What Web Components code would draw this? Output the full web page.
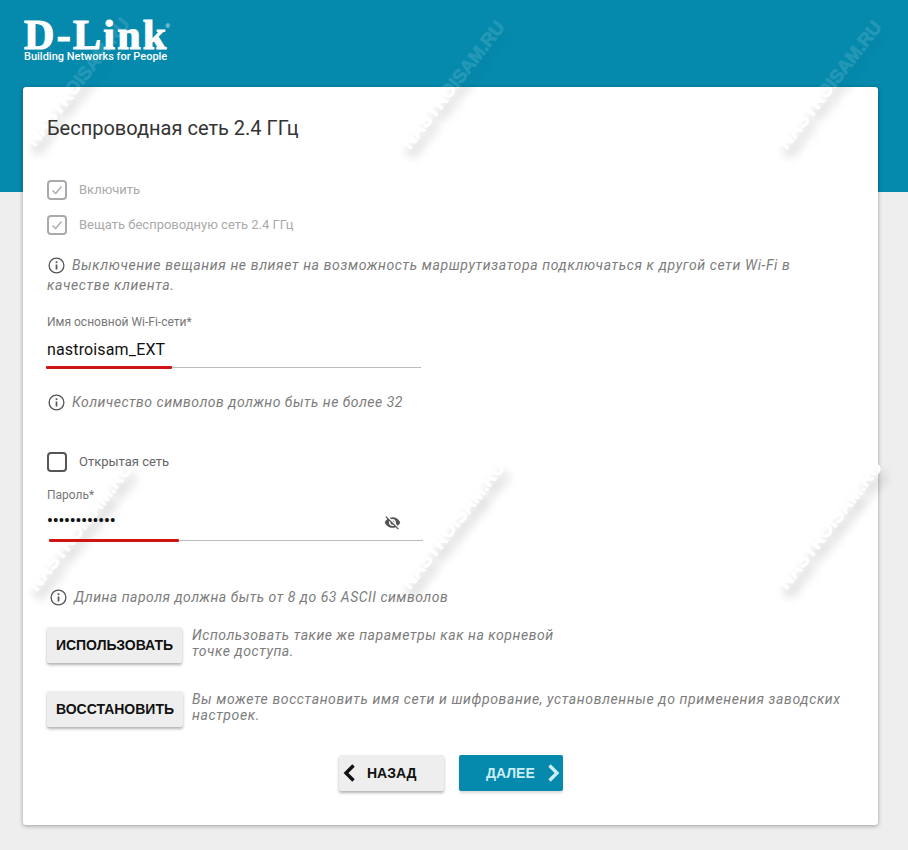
<!DOCTYPE html>
<html lang="ru">
<head>
<meta charset="utf-8">
<title>D-Link</title>
<style>
  html, body { margin: 0; padding: 0; }
  body { font-family: Roboto, "Liberation Sans", sans-serif; background: #eee; }
</style>
</head>
<body>
<dl-page>
  <dl-logo slot="logo"></dl-logo>

  <dl-card title="Беспроводная сеть 2.4 ГГц">
    <dl-check checked disabled>Включить</dl-check>
    <dl-check checked disabled style="margin-top:15px">Вещать беспроводную сеть 2.4 ГГц</dl-check>
    <dl-hint style="margin-top:20px; letter-spacing:.63px">Выключение вещания не влияет на возможность маршрутизатора подключаться к другой сети Wi-Fi в качестве клиента.</dl-hint>

    <dl-field label="Имя основной Wi-Fi-сети*" value="nastroisam_EXT" mark="126" style="margin-top:19px"></dl-field>
    <dl-hint style="margin-top:24px">Количество символов должно быть не более 32</dl-hint>

    <dl-check style="margin-top:40px">Открытая сеть</dl-check>
    <dl-field label="Пароль*" value="••••••••••••" mark="130" shift="2" password style="margin-top:15px"></dl-field>
    <dl-hint style="margin-top:46px; margin-left:2px">Длина пароля должна быть от 8 до 63 ASCII символов</dl-hint>

    <dl-action label="Использовать" style="margin-top:20px">Использовать такие же параметры как на корневой точке доступа.</dl-action>
    <dl-action label="Восстановить" wide style="margin-top:28px; letter-spacing:.62px">Вы можете восстановить имя сети и шифрование, установленные до применения заводских настроек.</dl-action>

    <dl-nav>
      <dl-nav-button dir="back">Назад</dl-nav-button>
      <dl-nav-button dir="next">Далее</dl-nav-button>
    </dl-nav>
  </dl-card>

  <dl-watermark slot="marks" x="78" y="82" fade="5"></dl-watermark>
  <dl-watermark slot="marks" x="453" y="85" fade="2"></dl-watermark>
  <dl-watermark slot="marks" x="830" y="85" fade="2"></dl-watermark>
  <dl-watermark slot="marks" x="80" y="527"></dl-watermark>
  <dl-watermark slot="marks" x="453" y="525"></dl-watermark>
  <dl-watermark slot="marks" x="830" y="525"></dl-watermark>
</dl-page>

<script>
// Страница: бирюзовая полоса сверху, логотип и карточка поверх неё
class DlPage extends HTMLElement {
  constructor() {
    super();
    this.attachShadow({ mode: 'open' });
    this.shadowRoot.innerHTML = `
      <style>
        :host {
          display: block;
          position: relative;
          height: 850px;
          overflow: hidden;
          background: linear-gradient(#0589ac 0 192px, #eeeeee 192px);
        }
        .head { padding: 22px 24px 0; height: 65px; }
        .main { padding: 0 30px 0 23px; }
      </style>
      <div class="head"><slot name="logo"></slot></div>
      <div class="main"><slot></slot></div>
      <slot name="marks"></slot>
    `;
  }
}

class DlLogo extends HTMLElement {
  constructor() {
    super();
    this.attachShadow({ mode: 'open' });
    this.shadowRoot.innerHTML = `
      <style>
        :host { display: block; width: 146px; color: #fff; }
        .name {
          display: flex;
          align-items: flex-start;
          font: 700 42px/27px "Liberation Serif", serif;
          letter-spacing: 2.3px;
          -webkit-text-stroke: 1.2px #fff;
        }
        .reg {
          font: 400 6px/8px "Liberation Sans", sans-serif;
          letter-spacing: 0;
          -webkit-text-stroke: 0;
          margin-left: -3px;
        }
        .tag {
          margin-top: 1px;
          font: 500 11px/14px Roboto, sans-serif;
          white-space: nowrap;
        }
      </style>
      <div class="name"><span>D-Link</span><span class="reg">®</span></div>
      <div class="tag">Building Networks for People</div>
    `;
  }
}

class DlCard extends HTMLElement {
  constructor() {
    super();
    this.attachShadow({ mode: 'open' });
    this.shadowRoot.innerHTML = `
      <style>
        :host {
          display: block;
          box-sizing: border-box;
          height: 738px;
          padding: 30px 24px 0;
          background: #fff;
          border-radius: 3px;
          box-shadow: 0 1px 4px rgba(0, 0, 0, .35);
        }
        h2 {
          position: relative;
          z-index: 1;
          margin: 0 0 41px;
          font: 400 20px/22px Roboto, "Liberation Sans", sans-serif;
          color: #333;
        }
      </style>
      <h2></h2>
      <slot></slot>
    `;
    this.shadowRoot.querySelector('h2').textContent = this.getAttribute('title');
    this.removeAttribute('title');
  }
}

class DlCheck extends HTMLElement {
  constructor() {
    super();
    this.attachShadow({ mode: 'open' });
    const checked = this.hasAttribute('checked');
    const disabled = this.hasAttribute('disabled');
    this.shadowRoot.innerHTML = `
      <style>
        :host {
          display: flex;
          position: relative;
          z-index: 1;
          align-items: center;
          gap: 12px;
          font-size: 13px;
          line-height: 20px;
          color: ${disabled ? '#aaa' : '#666'};
        }
        .box {
          box-sizing: border-box;
          width: 20px;
          height: 20px;
          border: 2px solid ${disabled ? '#aaa' : '#555'};
          border-radius: 4px;
          display: flex;
          align-items: center;
          justify-content: center;
        }
        svg { display: block; width: 12px; height: 12px; }
      </style>
      <span class="box">${checked ? `
        <svg viewBox="0 0 12 12" fill="none" stroke="#aaa" stroke-width="1.4">
          <path d="M1.5 6.5 4.7 9.5 10.5 2.5"/>
        </svg>` : ''}</span>
      <span><slot></slot></span>
    `;
  }
}

class DlHint extends HTMLElement {
  constructor() {
    super();
    this.attachShadow({ mode: 'open' });
    this.shadowRoot.innerHTML = `
      <style>
        :host {
          display: block;
          position: relative;
          z-index: 1;
          max-width: 770px;
          font-style: italic;
          font-size: 14px;
          letter-spacing: .5px;
          line-height: 20px;
          color: #7c7c7c;
        }
        svg { width: 17px; height: 17px; vertical-align: -4px; margin: 0 7px 0 1px; }
      </style>
      <svg viewBox="0 0 17 17" fill="none" stroke="#555">
        <circle cx="8.5" cy="8.5" r="7.4" stroke-width="1.3"/>
        <path d="M8.5 7.5v5" stroke-width="1.7"/>
        <path d="M8.5 4.3v1.8" stroke-width="1.7"/>
      </svg><slot></slot>
    `;
  }
}

class DlField extends HTMLElement {
  constructor() {
    super();
    this.attachShadow({ mode: 'open' });
    const password = this.hasAttribute('password');
    const shift = this.getAttribute('shift') || 0;
    this.shadowRoot.innerHTML = `
      <style>
        /* z-index: значение и красная черта лежат поверх водяного знака */
        :host { display: block; position: relative; z-index: 1; width: 376px; }
        label { display: block; font-size: 12px; line-height: 16px; color: #777; }
        .row {
          display: flex;
          align-items: center;
          justify-content: space-between;
          box-sizing: border-box;
          height: 36px;
          margin-top: 1px;
          color: #111;
          font-size: 16px;
          letter-spacing: .15px;
        }
        .val.dots { font-weight: 700; letter-spacing: -.05px; margin-bottom: 3px; }
        .line {
          position: relative;
          width: 374px;
          height: 1px;
          margin-left: ${shift}px;
          background: #bbb;
        }
        .mark {
          position: absolute;
          left: ${shift ? 0 : -1}px;
          top: -1px;
          height: 3px;
          background: #d01313;
          border-radius: 1px;
        }
        svg { display: block; width: 17px; height: 17px; margin-right: 22px; fill: #555; }
      </style>
      <label></label>
      <div class="row">
        <span class="val${password ? ' dots' : ''}"></span>
        ${password ? `<svg viewBox="0 0 24 24"><path d="M12 7c2.76 0 5 2.24 5 5 0 .65-.13 1.26-.36 1.83l2.92 2.92c1.51-1.26 2.7-2.89 3.43-4.75-1.73-4.39-6-7.5-11-7.5-1.4 0-2.74.25-3.98.7l2.16 2.16C10.74 7.13 11.35 7 12 7zM2 4.27l2.28 2.28.46.46C3.08 8.3 1.78 10.02 1 12c1.73 4.39 6 7.5 11 7.5 1.55 0 3.03-.3 4.38-.84l.42.42L19.73 22 21 20.73 3.27 3 2 4.27zM7.53 9.8l1.55 1.55c-.05.21-.08.43-.08.65 0 1.66 1.34 3 3 3 .22 0 .44-.03.65-.08l1.55 1.55c-.67.33-1.41.53-2.2.53-2.76 0-5-2.24-5-5 0-.79.2-1.53.53-2.2zm4.31-.78l3.15 3.15.02-.16c0-1.66-1.34-3-3-3l-.17.01z"/></svg>` : ''}
      </div>
      <div class="line"><span class="mark"></span></div>
    `;
    this.shadowRoot.querySelector('label').textContent = this.getAttribute('label');
    this.shadowRoot.querySelector('.val').textContent = this.getAttribute('value');
    this.shadowRoot.querySelector('.mark').style.width = this.getAttribute('mark') + 'px';
  }
}

class DlAction extends HTMLElement {
  constructor() {
    super();
    this.attachShadow({ mode: 'open' });
    const wide = this.hasAttribute('wide');
    this.shadowRoot.innerHTML = `
      <style>
        :host { display: flex; align-items: flex-start; gap: ${wide ? 9 : 10}px; letter-spacing: .55px; }
        button {
          flex: none;
          width: ${wide ? 136 : 135}px;
          height: 36px;
          padding: 0;
          border: 0;
          border-radius: 2px;
          background: #eee;
          box-shadow: 0 2px 3px rgba(0, 0, 0, .3);
          font: 700 14px "Liberation Sans", Arial, sans-serif;
          letter-spacing: 0;
          text-transform: uppercase;
          color: #111;
        }
        p {
          margin: 0;
          max-width: ${wide ? 660 : 370}px;
          font-style: italic;
          font-size: 14px;
          line-height: 16px;
          color: #7c7c7c;
        }
      </style>
      <button></button>
      <p><slot></slot></p>
    `;
    this.shadowRoot.querySelector('button').textContent = this.getAttribute('label');
  }
}

class DlNav extends HTMLElement {
  constructor() {
    super();
    this.attachShadow({ mode: 'open' });
    this.shadowRoot.innerHTML = `
      <style>
        :host { display: flex; gap: 15px; justify-content: center; margin-top: 28px; padding-left: 1px; }
      </style>
      <slot></slot>
    `;
  }
}

class DlNavButton extends HTMLElement {
  constructor() {
    super();
    this.attachShadow({ mode: 'open' });
    const next = this.getAttribute('dir') === 'next';
    this.shadowRoot.innerHTML = `
      <style>
        :host { display: block; }
        button {
          display: flex;
          align-items: center;
          box-sizing: border-box;
          width: ${next ? 104 : 105}px;
          height: 36px;
          padding: 0 ${next ? '3px 0 27px' : '0 0 4px'};
          border: 0;
          border-radius: 2px;
          background: ${next ? '#0589ac' : '#eee'};
          box-shadow: 0 2px 3px rgba(0, 0, 0, ${next ? .15 : .3});
          font: 700 14px "Liberation Sans", Arial, sans-serif;
          text-transform: uppercase;
          color: ${next ? '#c9eef6' : '#111'};
        }
        svg { flex: none; width: 12px; height: 18px; fill: none; stroke: currentColor; stroke-width: 3.4; }
        .label { flex: 1; text-align: left; }
        .back { margin-left: 12px; }
      </style>
      <button>
        ${next ? '' : '<svg viewBox="0 0 12 18"><path d="M10.5 1.5 3 9l7.5 7.5"/></svg>'}
        <span class="label${next ? '' : ' back'}"><slot></slot></span>
        ${next ? '<svg viewBox="0 0 12 18"><path d="M1.5 1.5 9 9l-7.5 7.5"/></svg>' : ''}
      </button>
    `;
  }
}

// Водяной знак сайта: лежит поверх содержимого, поэтому позиция абсолютная.
// fade="N": выше края карточки (N px ниже центра знака) он едва виден на бирюзовой полосе
class DlWatermark extends HTMLElement {
  constructor() {
    super();
    this.attachShadow({ mode: 'open' });
    const fade = this.getAttribute('fade');
    this.shadowRoot.innerHTML = `
      <style>
        :host {
          position: absolute;
          left: ${this.getAttribute('x')}px;
          top: ${this.getAttribute('y')}px;
          width: 0;
          height: 0;
          pointer-events: none;
        }
        span {
          position: absolute;
          left: 0;
          top: 0;
          padding: 28px;
          transform: translate(-50%, -50%) rotate(-52deg);
          font: 700 18.5px/22px "Liberation Sans", Arial, sans-serif;
          white-space: nowrap;
          color: #fff;
          -webkit-text-stroke: .8px #fff;
          text-shadow: -4px 10px 10px rgba(0, 0, 0, .22);
          ${fade ? `-webkit-mask-image: linear-gradient(52deg, #000 calc(50% - ${fade}px), rgba(0,0,0,.12) calc(50% - ${fade}px));` : ''}
        }
      </style>
      <span>NASTROISAM.RU</span>
    `;
  }
}

customElements.define('dl-page', DlPage);
customElements.define('dl-logo', DlLogo);
customElements.define('dl-card', DlCard);
customElements.define('dl-check', DlCheck);
customElements.define('dl-hint', DlHint);
customElements.define('dl-field', DlField);
customElements.define('dl-action', DlAction);
customElements.define('dl-nav', DlNav);
customElements.define('dl-nav-button', DlNavButton);
customElements.define('dl-watermark', DlWatermark);
</script>
</body>
</html>
